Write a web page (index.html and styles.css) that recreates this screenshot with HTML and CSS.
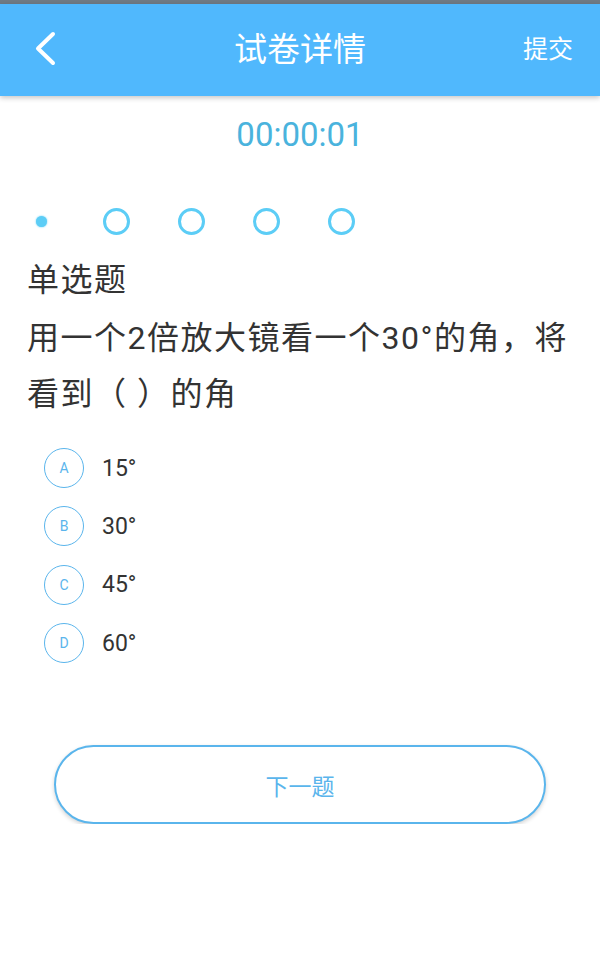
FILE: index.html
```html
<!DOCTYPE html>
<html lang="zh-CN">
<head>
<meta charset="UTF-8">
<title>试卷详情</title>
<meta name="viewport" content="width=device-width, initial-scale=1.0">
<link rel="stylesheet" href="styles.css">
</head>
<body>
  <div class="status-strip"></div>
  <header class="topbar">
    <a class="back" href="#">
      <svg width="24" height="36" viewBox="0 0 24 36">
        <path d="M20 3 L5 17.5 L20 32" fill="none" stroke="#fff" stroke-width="4" stroke-linecap="round" stroke-linejoin="round"/>
      </svg>
    </a>
    <h1>试卷详情</h1>
    <a class="submit" href="#">提交</a>
  </header>

  <div class="timer">00:00:01</div>

  <div class="steps">
    <span class="step current"></span>
    <span class="step"></span>
    <span class="step"></span>
    <span class="step"></span>
    <span class="step"></span>
  </div>

  <div class="question">
    <div class="q-type">单选题</div>
    <p class="q-text">用一个2倍放大镜看一个30°的角，将看到（ ）的角</p>
  </div>

  <ul class="options">
    <li><span class="letter">A</span><span class="opt-text">15°</span></li>
    <li><span class="letter">B</span><span class="opt-text">30°</span></li>
    <li><span class="letter">C</span><span class="opt-text">45°</span></li>
    <li><span class="letter">D</span><span class="opt-text">60°</span></li>
  </ul>

  <div class="actions">
    <button class="next">下一题</button>
  </div>
</body>
</html>
```

FILE: styles.css
```css
body {
  margin: 0;
  padding: 0;
  background: #fff;
  color: #333;
  font-family: Roboto, "Noto Sans CJK SC", sans-serif;
}
.status-strip {
  height: 4px;
  background: #6f7a84;
}
.topbar {
  height: 92px;
  background: #50b8fd;
  display: flex;
  align-items: center;
  justify-content: space-between;
  padding: 0 27px 0 33px;
  box-shadow: 0 2px 5px rgba(0,0,0,0.22);
  position: relative;
}
.topbar h1 {
  margin: 0;
  color: #fff;
  font-size: 33px;
  font-weight: normal;
  line-height: 40px;
  position: absolute;
  left: 0;
  right: 0;
  text-align: center;
  pointer-events: none;
}
.back {
  display: flex;
  margin-top: -2px;
}
.submit {
  color: #fff;
  text-decoration: none;
  font-size: 25px;
  line-height: 30px;
}
.timer {
  text-align: center;
  color: #4ab3dd;
  font-size: 33px;
  line-height: 40px;
  margin-top: 19px;
}
.steps {
  display: flex;
  align-items: center;
  height: 27px;
  margin-top: 53px;
  padding-left: 36px;
  gap: 48px;
}
.step {
  width: 21px;
  height: 21px;
  border: 3px solid #5ccdf6;
  border-radius: 50%;
}
.step.current {
  width: 11px;
  height: 11px;
  border: none;
  margin-right: 8px;
  background: #5ccdf6;
  box-shadow: 0 0 2px #5ccdf6;
}
.question {
  padding: 0 27px;
  margin-top: 25px;
  letter-spacing: 1.5px;
}
.q-type {
  font-size: 32px;
  line-height: 40px;
}
.q-text {
  margin: 0;
  font-size: 32px;
  line-height: 56px;
  margin-top: 10px;
}
.options {
  list-style: none;
  margin: 17px 0 0;
  padding: 0 0 0 44px;
}
.options li {
  display: flex;
  align-items: center;
  height: 58.3px;
}
.letter {
  box-sizing: border-box;
  width: 40px;
  height: 40px;
  border: 1.5px solid #5ab5ec;
  border-radius: 50%;
  color: #5ab5ec;
  font-size: 14px;
  display: flex;
  align-items: center;
  justify-content: center;
}
.opt-text {
  margin-left: 18px;
  font-size: 23px;
  color: #333;
}
.actions {
  padding: 0 54px;
  margin-top: 73px;
}
.next {
  width: 100%;
  height: 79px;
  background: #fff;
  border: 2px solid #5ab5ec;
  border-radius: 40px;
  color: #5ab5ec;
  font-size: 23px;
  font-family: "Noto Sans CJK SC", sans-serif;
  box-shadow: 0 2px 4px rgba(0,0,0,0.18);
  cursor: pointer;
}
```
